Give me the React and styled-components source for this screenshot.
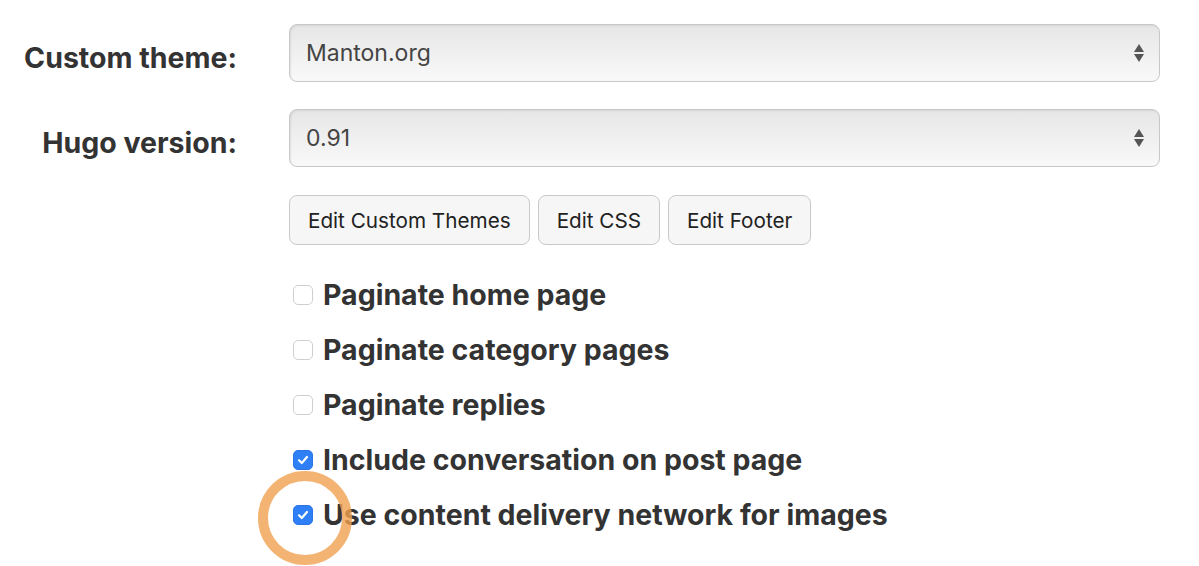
import React from "react";
import styled, { createGlobalStyle } from "styled-components";

const GlobalStyle = createGlobalStyle`
  html, body {
    margin: 0;
    padding: 0;
    background: #fff;
  }
  body {
    font-family: Inter, "Liberation Sans", sans-serif;
    color: #333;
  }
`;

const Form = styled.div`
  padding: 24px 0 30px;
  min-height: 566px;
  box-sizing: border-box;
`;

const Row = styled.div`
  display: grid;
  grid-template-columns: 237px 871px;
  column-gap: 52px;
  align-items: center;
  margin-bottom: ${(p) => p.gap || 0}px;
`;

const Label = styled.label`
  font-size: 28.5px;
  font-weight: 700;
  color: #333;
  text-align: right;
  padding-top: 9px;
`;

const Select = styled.div`
  height: 58px;
  box-sizing: border-box;
  border: 1px solid #c8c8c8;
  border-radius: 8px;
  background: linear-gradient(#e6e6e6, #f9f9f9);
  box-shadow: inset 1px 1px 2px rgba(0, 0, 0, 0.08);
  display: flex;
  align-items: center;
  justify-content: space-between;
  padding: 0 15px 0 16px;
  font-size: 23px;
  color: #444;
`;

const Arrows = styled.span`
  display: flex;
  flex-direction: column;
  gap: 2px;
`;

const Arrow = styled.span`
  width: 0;
  height: 0;
  border-left: 5px solid transparent;
  border-right: 5px solid transparent;
  ${(p) =>
    p.up
      ? "border-bottom: 8px solid #555;"
      : "border-top: 8px solid #555;"}
`;

const Empty = styled.div``;

const Buttons = styled.div`
  display: flex;
  gap: 8px;
`;

const Button = styled.button`
  height: 50px;
  box-sizing: border-box;
  padding: 0 18px;
  border: 1px solid #c9c9c9;
  border-radius: 8px;
  background: #f6f6f6;
  font-family: Inter, "Liberation Sans", sans-serif;
  font-size: 20.7px;
  color: #222;
`;

const Checks = styled.div`
  display: flex;
  flex-direction: column;
  position: relative;
`;

const CheckRow = styled.div`
  display: flex;
  align-items: center;
  height: 55px;
  padding-left: 4px;
`;

const Box = styled.span`
  width: 20px;
  height: 20px;
  box-sizing: border-box;
  border-radius: 5px;
  margin-right: 10px;
  display: flex;
  align-items: center;
  justify-content: center;
  ${(p) =>
    p.checked
      ? "background: #2f7ff6; border: 1px solid #2a74e4;"
      : "background: #fff; border: 1px solid #cfcfcf;"}
`;

const CheckText = styled.span`
  font-size: 28.5px;
  font-weight: 700;
  color: #333;
`;

const Highlight = styled.div`
  position: absolute;
  left: -31px;
  top: 204px;
  width: 74px;
  height: 74px;
  border: 10px solid rgba(240, 160, 80, 0.8);
  border-radius: 50%;
  pointer-events: none;
`;

const checks = [
  { label: "Paginate home page", checked: false },
  { label: "Paginate category pages", checked: false },
  { label: "Paginate replies", checked: false },
  { label: "Include conversation on post page", checked: true },
  { label: "Use content delivery network for images", checked: true },
];

const Tick = () => (
  <svg width="14" height="14" viewBox="0 0 14 14">
    <path
      d="M3 7.3 L5.8 10 L11 4"
      fill="none"
      stroke="#fff"
      strokeWidth="2.2"
      strokeLinecap="round"
      strokeLinejoin="round"
    />
  </svg>
);

const Dropdown = ({ value }) => (
  <Select>
    <span>{value}</span>
    <Arrows>
      <Arrow up />
      <Arrow />
    </Arrows>
  </Select>
);

export default function App() {
  return (
    <>
      <GlobalStyle />
      <Form>
        <Row gap={27}>
          <Label>Custom theme:</Label>
          <Dropdown value="Manton.org" />
        </Row>

        <Row gap={28}>
          <Label>Hugo version:</Label>
          <Dropdown value="0.91" />
        </Row>

        <Row gap={22}>
          <Empty />
          <Buttons>
            <Button>Edit Custom Themes</Button>
            <Button>Edit CSS</Button>
            <Button>Edit Footer</Button>
          </Buttons>
        </Row>

        <Row>
          <Empty />
          <Checks>
            {checks.map((c) => (
              <CheckRow key={c.label}>
                <Box checked={c.checked}>{c.checked && <Tick />}</Box>
                <CheckText>{c.label}</CheckText>
              </CheckRow>
            ))}
            <Highlight />
          </Checks>
        </Row>
      </Form>
    </>
  );
}
